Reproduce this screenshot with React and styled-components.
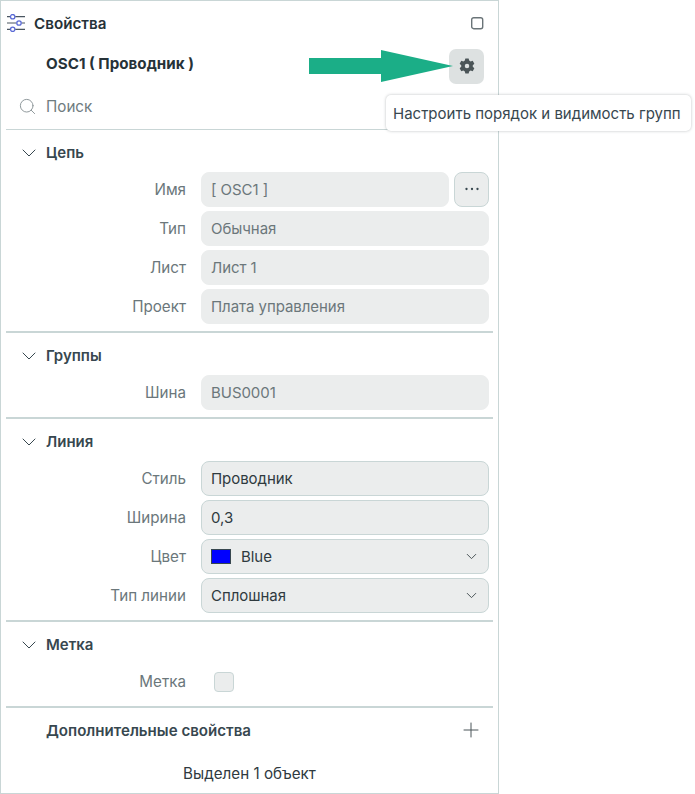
import React from "react";
import styled, { createGlobalStyle } from "styled-components";
import { ChevronDown, Search, Plus } from "lucide-react";

const Global = createGlobalStyle`
  html, body { margin: 0; padding: 0; background: #fff; }
  body { font-family: Inter, "Noto Sans", sans-serif; font-size: 15.2px; color: #2f3a3f; }
`;

const Page = styled.div`
  position: relative;
  width: 695px;
  height: 794px;
  overflow: hidden;
`;

const Panel = styled.div`
  box-sizing: border-box;
  width: 499px;
  height: 794px;
  border: 1px solid #c9d6d6;
  padding: 0 5px;
  display: flex;
  flex-direction: column;
`;

const Header = styled.div`
  height: 45px;
  display: flex;
  align-items: center;
  padding: 0 9px 0 1px;
  gap: 9px;
  box-sizing: border-box;
`;

const Title = styled.div`
  flex: 1;
  font-weight: 600;
  color: #263238;
`;

const Subject = styled.div`
  height: 38px;
  display: flex;
  align-items: flex-start;
  justify-content: space-between;
  padding: 0 9px 0 40px;
  font-weight: 700;
  color: #263238;
`;

const SubjectName = styled.span`
  line-height: 18px;
  margin-top: 9px;
`;

const GearButton = styled.div`
  width: 35px;
  height: 35px;
  margin-top: 3px;
  border-radius: 7px;
  background: #dde1e1;
  display: flex;
  align-items: center;
  justify-content: center;
`;

const SearchRow = styled.div`
  height: 46px;
  display: flex;
  align-items: center;
  gap: 9px;
  padding-left: 12px;
  box-sizing: border-box;
  color: #6f7c80;
  border-bottom: 1px solid #c9d6d6;
`;

const Section = styled.section`
  border-bottom: 2px solid #c9d6d6;
  padding-bottom: ${(p) => p.$pb ?? 7}px;
`;

const SectionHead = styled.div`
  box-sizing: border-box;
  height: 42px;
  display: flex;
  align-items: center;
  gap: 5px;
  padding: 4px 0 0 11px;
  font-size: 15px;
  font-weight: 600;
  color: #37474f;
`;

const Rows = styled.div`
  display: flex;
  flex-direction: column;
  gap: 4px;
`;

const Row = styled.div`
  display: grid;
  grid-template-columns: 180px 1fr;
  column-gap: 15px;
  align-items: center;
  margin-top: ${(p) => p.$mt ?? 0}px;
`;

const Label = styled.div`
  text-align: right;
  color: #6b777b;
`;

const FieldLine = styled.div`
  display: flex;
  gap: 5px;
  width: 288px;
`;

const Field = styled.div`
  box-sizing: border-box;
  flex: 1;
  height: 35px;
  border-radius: 8px;
  background: #ebeded;
  border: 1px solid ${(p) => (p.$editable ? "#c9d6d6" : "#ebeded")};
  display: flex;
  align-items: center;
  padding: 0 8px 0 9px;
  font-size: 15px;
  letter-spacing: -0.05px;
  color: ${(p) => (p.$editable ? "#2f3a3f" : "#6b777b")};
`;

const FieldText = styled.span`
  flex: 1;
`;

const Swatch = styled.span`
  width: 20px;
  height: 15px;
  background: #0000ff;
  border: 1px solid #37474f;
  box-sizing: border-box;
  margin-right: 10px;
`;

const DotsButton = styled.div`
  box-sizing: border-box;
  width: 35px;
  height: 35px;
  border-radius: 8px;
  background: #ebeded;
  border: 1px solid #c9d6d6;
  display: flex;
  align-items: center;
  justify-content: center;
`;

const Check = styled.div`
  box-sizing: border-box;
  margin-left: 13px;
  width: 20px;
  height: 20px;
  border-radius: 4px;
  background: #ebeded;
  border: 1px solid #c9d6d6;
`;

const Extra = styled.div`
  height: 46px;
  display: flex;
  align-items: center;
  justify-content: space-between;
  padding: 0 10px 0 40px;
  font-size: 15.1px;
  font-weight: 600;
  color: #37474f;
`;

const Footer = styled.div`
  height: 40px;
  display: flex;
  align-items: center;
  justify-content: center;
  color: #2f3a3f;
`;

const Tooltip = styled.div`
  position: absolute;
  left: 386px;
  top: 95px;
  width: 305px;
  height: 36px;
  box-sizing: border-box;
  padding: 1px 0 0 7px;
  background: #fff;
  border-radius: 5px;
  box-shadow: 0 0 3px rgba(60, 70, 75, 0.35);
  display: flex;
  align-items: center;
  font-size: 15px;
  color: #37474f;
  white-space: nowrap;
`;

const ArrowArt = styled.svg`
  position: absolute;
  left: 305px;
  top: 46px;
`;

const SlidersIcon = () => (
  <svg width="18" height="18" viewBox="0 0 18 18" fill="none" stroke="#4a5660" strokeWidth="1.200">
    <path d="M0 2.700h3.200M8.200 2.700H18M0 9h9.500M14.500 9H18M0 15.300h3.200M8.200 15.300H18" />
    <g stroke="#5b6bd6" strokeWidth="1.300">
      <circle cx="5.700" cy="2.700" r="2.200" />
      <circle cx="12" cy="9" r="2.200" />
      <circle cx="5.700" cy="15.300" r="2.200" />
    </g>
  </svg>
);

const SquareIcon = () => (
  <svg width="14" height="14" viewBox="0 0 14 14" fill="none">
    <rect x="1.700" y="1.700" width="11" height="11" rx="2" stroke="#6a7478" strokeWidth="1.400" />
  </svg>
);

const GearIcon = () => (
  <svg width="18" height="18" viewBox="0 0 24 24" fill="#4b5558">
    <path fillRule="evenodd" d="M9.800 2h4.400l.7 2.800 1.900 1.100 2.800-.8 2.200 3.800-2.100 2v2.200l2.100 2-2.200 3.800-2.800-.8-1.900 1.100-.7 2.800H9.800l-.7-2.800-1.900-1.100-2.800.8-2.200-3.800 2.100-2v-2.200l-2.100-2 2.200-3.800 2.800.8 1.900-1.100.7-2.800zM12 9a3 3 0 100 6 3 3 0 000-6z" />
  </svg>
);

const DotsIcon = () => (
  <svg width="16" height="6" viewBox="0 0 16 6" fill="#37474f">
    <circle cx="2.500" cy="3" r="1.150" />
    <circle cx="8" cy="3" r="1.150" />
    <circle cx="13.500" cy="3" r="1.150" />
  </svg>
);

const Chevron = () => <ChevronDown size={24} strokeWidth={1} color="#37474f" />;
const SmallChevron = () => <ChevronDown size={17} strokeWidth={1.4} color="#4b5558" />;

const PropRow = ({ label, children }) => (
  <Row>
    <Label>{label}</Label>
    <FieldLine>{children}</FieldLine>
  </Row>
);

export default function App() {
  return (
    <Page>
      <Global />
      <Panel>
        <Header>
          <SlidersIcon />
          <Title>Свойства</Title>
          <SquareIcon />
        </Header>
        <Subject>
          <SubjectName>OSC1 ( Проводник )</SubjectName>
          <GearButton><GearIcon /></GearButton>
        </Subject>
        <SearchRow>
          <Search size={19} strokeWidth={1.2} color="#8b9598" />
          <span>Поиск</span>
        </SearchRow>

        <Section>
          <SectionHead><Chevron />Цепь</SectionHead>
          <Rows>
            <PropRow label="Имя">
              <Field><FieldText>[ OSC1 ]</FieldText></Field>
              <DotsButton><DotsIcon /></DotsButton>
            </PropRow>
            <PropRow label="Тип"><Field>Обычная</Field></PropRow>
            <PropRow label="Лист"><Field>Лист 1</Field></PropRow>
            <PropRow label="Проект"><Field>Плата управления</Field></PropRow>
          </Rows>
        </Section>

        <Section>
          <SectionHead><Chevron />Группы</SectionHead>
          <Rows>
            <PropRow label="Шина"><Field>BUS0001</Field></PropRow>
          </Rows>
        </Section>

        <Section>
          <SectionHead><Chevron />Линия</SectionHead>
          <Rows>
            <PropRow label="Стиль"><Field $editable>Проводник</Field></PropRow>
            <PropRow label="Ширина"><Field $editable>0,3</Field></PropRow>
            <PropRow label="Цвет">
              <Field $editable><Swatch /><FieldText>Blue</FieldText><SmallChevron /></Field>
            </PropRow>
            <PropRow label="Тип линии">
              <Field $editable><FieldText>Сплошная</FieldText><SmallChevron /></Field>
            </PropRow>
          </Rows>
        </Section>

        <Section $pb={14}>
          <SectionHead><Chevron />Метка</SectionHead>
          <Row $mt={8}>
            <Label>Метка</Label>
            <Check />
          </Row>
        </Section>

        <Extra>
          <span>Дополнительные свойства</span>
          <Plus size={24} strokeWidth={1} color="#4b5558" />
        </Extra>
        <Footer>Выделен 1 объект</Footer>
      </Panel>

      <ArrowArt width="150" height="36" viewBox="0 0 150 36">
        <polygon points="4,12 76,12 76,4 148,20 76,36 76,28 4,28" fill="#1bae87" />
      </ArrowArt>
      <Tooltip>Настроить порядок и видимость групп</Tooltip>
    </Page>
  );
}
